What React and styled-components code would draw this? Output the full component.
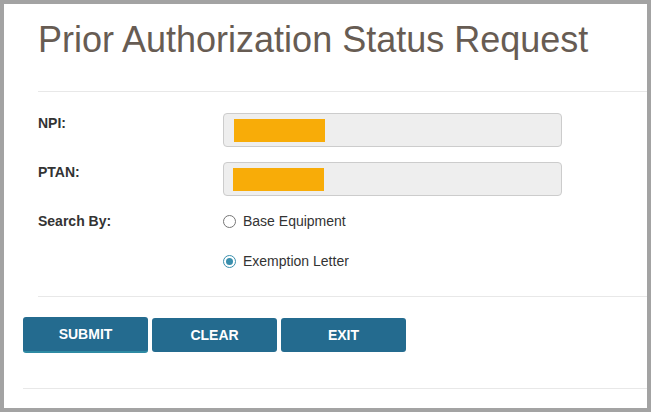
import React, { useState } from "react";
import styled, { createGlobalStyle } from "styled-components";

const GlobalStyle = createGlobalStyle`
  html, body {
    margin: 0;
    padding: 0;
    background: #ffffff;
  }
  * {
    box-sizing: border-box;
  }
`;

function App() {
  const [searchBy, setSearchBy] = useState("letter");

  return (
    <>
      <GlobalStyle />
      <Frame>
        <Content>
          <Title>Prior Authorization Status Request</Title>
          <Rule $indent={15} $top={31} />

          <Form>
            <Label>NPI:</Label>
            <Field>
              <Masked />
            </Field>

            <Label>PTAN:</Label>
            <Field>
              <Masked $shift={-1} />
            </Field>

            <Label>Search By:</Label>
            <RadioGroup>
              <RadioRow onClick={() => setSearchBy("base")}>
                <RadioDot $checked={searchBy === "base"} />
                Base Equipment
              </RadioRow>
              <RadioRow onClick={() => setSearchBy("letter")}>
                <RadioDot $checked={searchBy === "letter"} />
                Exemption Letter
              </RadioRow>
            </RadioGroup>
          </Form>

          <Rule $indent={15} $top={25} />

          <ButtonBar>
            <Button $focused>SUBMIT</Button>
            <Button>CLEAR</Button>
            <Button>EXIT</Button>
          </ButtonBar>

          <Rule $indent={0} $top={35} />
        </Content>
      </Frame>
    </>
  );
}

export default App;

const Frame = styled.div`
  width: 651px;
  height: 412px;
  border: 4px solid #a3a3a3;
  background: #ffffff;
  overflow: hidden;
  font-family: "Liberation Sans", Arial, sans-serif;
`;

const Content = styled.div`
  padding-left: 19px;
`;

const Title = styled.h1`
  margin: 16px 0 0 15px;
  font-size: 36px;
  line-height: 40px;
  font-weight: 400;
  color: #675c53;
`;

const Rule = styled.div`
  margin-top: ${(p) => p.$top}px;
  margin-left: ${(p) => p.$indent}px;
  height: 1px;
  background: #e8e8e8;
`;

const Form = styled.div`
  display: grid;
  grid-template-columns: 185px 339px;
  row-gap: 15px;
  margin: 21px 0 0 15px;
`;

const Label = styled.div`
  font-size: 14px;
  line-height: 20px;
  font-weight: 700;
  color: #333333;
`;

const Field = styled.div`
  height: 34px;
  border: 1px solid #cccccc;
  border-radius: 4px;
  background: #eeeeee;
  display: flex;
  align-items: center;
  padding-left: 10px;
`;

const Masked = styled.span`
  display: block;
  width: 91px;
  height: 23px;
  background: #f8ac08;
  margin-left: ${(p) => p.$shift || 0}px;
`;

const RadioGroup = styled.div`
  display: flex;
  flex-direction: column;
  gap: 20px;
`;

const RadioRow = styled.label`
  display: flex;
  align-items: center;
  gap: 7px;
  height: 20px;
  font-size: 14px;
  color: #333333;
  cursor: pointer;
`;

const RadioDot = styled.span`
  position: relative;
  width: 13px;
  height: 13px;
  border-radius: 50%;
  border: 1px solid ${(p) => (p.$checked ? "#3a8fad" : "#767676")};
  background: #ffffff;
  flex-shrink: 0;

  &::after {
    content: "";
    display: ${(p) => (p.$checked ? "block" : "none")};
    position: absolute;
    top: 2px;
    left: 2px;
    width: 7px;
    height: 7px;
    border-radius: 50%;
    background: #3a8fad;
  }
`;

const ButtonBar = styled.div`
  display: flex;
  align-items: center;
  gap: 4px;
  margin-top: 20px;
`;

const Button = styled.button`
  width: 125px;
  height: ${(p) => (p.$focused ? 36 : 34)}px;
  border: none;
  border-bottom: ${(p) => (p.$focused ? "2px solid #2e8aa3" : "none")};
  border-radius: 3px;
  background: #246b8f;
  color: #ffffff;
  font-family: "Liberation Sans", Arial, sans-serif;
  font-size: 14px;
  font-weight: 700;
  padding: 0;
  cursor: pointer;
`;
